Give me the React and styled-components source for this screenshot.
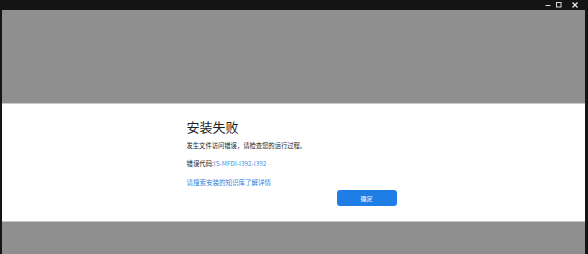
import React from 'react';
import styled, { createGlobalStyle } from 'styled-components';

const GlobalStyle = createGlobalStyle`
  html, body {
    margin: 0;
    padding: 0;
    background: #141414;
  }
  body {
    font-family: "Noto Sans CJK SC", "Noto Sans", sans-serif;
  }
`;

const Window = styled.div`
  width: 588px;
  height: 254px;
  display: flex;
  flex-direction: column;
  background: #141414;
  overflow: hidden;
`;

const TitleBar = styled.div`
  height: 10px;
  display: flex;
  justify-content: flex-end;
  align-items: center;
  padding-right: 10px;
  background: #141414;
`;

const Ctrl = styled.button`
  width: 6px;
  height: 6px;
  padding: 0;
  margin: 0 0 0 ${(p) => p.gap || 0}px;
  border: none;
  background: transparent;
  display: flex;
  align-items: center;
  justify-content: center;
  svg {
    display: block;
  }
`;

const Body = styled.div`
  flex: 1;
  display: flex;
  flex-direction: column;
  margin: 0 3px 0 2px;
  background: #8f8f8f;
`;

const Shade = styled.div`
  height: ${(p) => p.h}px;
  background: #8f8f8f;
`;

const Band = styled.div`
  height: 117px;
  background: #ffffff;
  border-top: 1px solid #c8c8c8;
  border-bottom: 1px solid #c8c8c8;
  display: flex;
  justify-content: center;
`;

const Dialog = styled.div`
  width: 210px;
  margin-left: -4px;
  padding-top: 14px;
  display: flex;
  flex-direction: column;
`;

const Title = styled.h1`
  margin: 0;
  font-size: 13px;
  font-weight: 400;
  line-height: 18px;
  color: #1f1f1f;
`;

const Message = styled.p`
  margin: 5px 0 0;
  font-size: 6.3px;
  line-height: 10px;
  color: #1a1a1a;
`;

const Code = styled.p`
  margin: 8px 0 0;
  font-size: 6.4px;
  line-height: 10px;
  color: #1a1a1a;
  span {
    color: #3f8fe6;
  }
`;

const Link = styled.a`
  margin-top: 8px;
  font-size: 6.5px;
  line-height: 10px;
  color: #2a7fe0;
  text-decoration: none;
`;

const Footer = styled.div`
  display: flex;
  justify-content: flex-end;
  margin-top: 3px;
`;

const PrimaryButton = styled.button`
  width: 60px;
  height: 16px;
  border: none;
  border-radius: 3px;
  background: #1f7de6;
  color: #ffffff;
  font-family: inherit;
  font-size: 6px;
  padding: 0;
`;

export default function App() {
  return (
    <>
      <GlobalStyle />
      <Window>
        <TitleBar>
          <Ctrl aria-label="minimize">
            <svg width="6" height="6" viewBox="0 0 6 6">
              <path d="M0.5 3.5h5" stroke="#d8d8d8" strokeWidth="1" />
            </svg>
          </Ctrl>
          <Ctrl aria-label="maximize" gap={5}>
            <svg width="6" height="6" viewBox="0 0 6 6">
              <rect x="0.5" y="0.5" width="4.5" height="4.5" fill="none" stroke="#d8d8d8" strokeWidth="1" />
            </svg>
          </Ctrl>
          <Ctrl aria-label="close" gap={10}>
            <svg width="6" height="6" viewBox="0 0 6 6">
              <path d="M0.5 0.5l5 5M5.5 0.5l-5 5" stroke="#f0f0f0" strokeWidth="1.2" />
            </svg>
          </Ctrl>
        </TitleBar>
        <Body>
          <Shade h={93} />
          <Band>
            <Dialog>
              <Title>安装失败</Title>
              <Message>发生文件访问错误，请检查您的运行过程。</Message>
              <Code>
                错误代码:<span>IS-MFDI-I392-I392</span>
              </Code>
              <Link href="#">请搜索安装的知识库了解详情</Link>
              <Footer>
                <PrimaryButton>确定</PrimaryButton>
              </Footer>
            </Dialog>
          </Band>
          <Shade h={32} />
        </Body>
      </Window>
    </>
  );
}
